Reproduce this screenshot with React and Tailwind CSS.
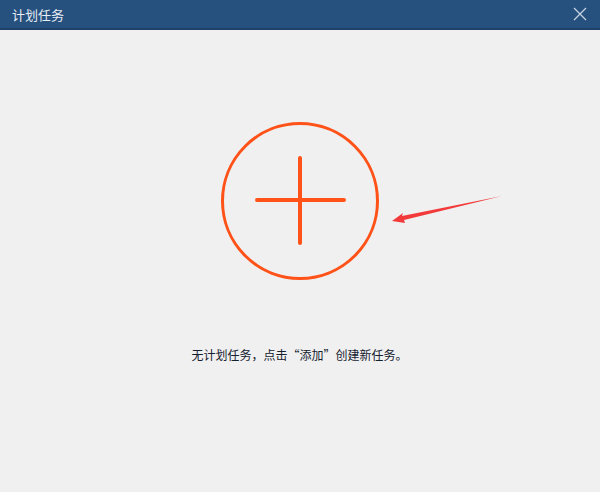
export default function App() {
  return (
    <div
      className="w-[600px] h-[492px] bg-[#f0f0f0] flex flex-col overflow-hidden"
      style={{ fontFamily: '"Noto Sans CJK SC", "Noto Sans", sans-serif' }}
    >
      <div className="h-[30px] shrink-0 bg-[#26507e] border-b-2 border-[#1d416a] flex items-center justify-between pl-[12px] pr-[13px]">
        <span className="text-[13px] text-[#e8eef5] leading-none">计划任务</span>
        <svg width="14" height="14" viewBox="0 0 14 14">
          <path d="M1 1L13 13M13 1L1 13" stroke="#c5d2df" strokeWidth="1.3" />
        </svg>
      </div>
      <div className="flex-1 flex flex-col items-center">
        <div className="mt-[91px] relative w-[600px] h-[160px] flex justify-center">
          <button className="w-[160px] h-[160px] rounded-full flex items-center justify-center">
            <svg width="160" height="160" viewBox="0 0 160 160">
              <circle cx="80" cy="80" r="77.5" fill="none" stroke="#ff5218" strokeWidth="3" />
              <path d="M37 79H124M80 37V122" stroke="#ff5218" strokeWidth="4" strokeLinecap="round" />
            </svg>
          </button>
          <svg className="absolute left-[388px] top-[73px]" width="120" height="40" viewBox="0 0 120 40">
            <path d="M114 2L14 22L15 19L4 27L17 29L16 26Z" fill="#f23a3a" />
          </svg>
        </div>
        <div className="mt-[68px] -ml-[1px] text-[12px] text-[#14202e] leading-none">
          无计划任务，点击“添加”创建新任务。
        </div>
      </div>
    </div>
  );
}
